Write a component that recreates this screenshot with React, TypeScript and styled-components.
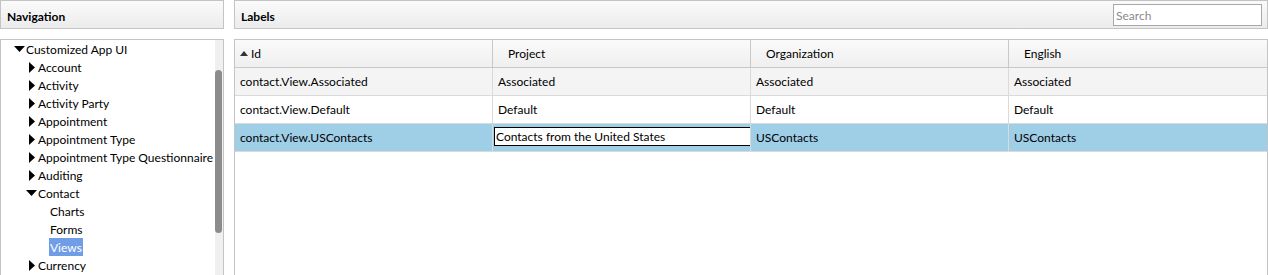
import React from "react";
import styled, { createGlobalStyle } from "styled-components";

const Global = createGlobalStyle`
  html, body { margin: 0; padding: 0; background: #ffffff; overflow: hidden; }
  body { font-family: "Lato", "Open Sans", sans-serif; font-size: 12px; color: #000; }
`;

const Page = styled.div`
  display: flex;
  gap: 10px;
  width: 1268px;
  height: 275px;
  overflow: hidden;
`;

const Column = styled.div<{ $w?: number }>`
  display: flex;
  flex-direction: column;
  gap: 10px;
  ${(p) => (p.$w ? `width: ${p.$w}px; flex: none;` : "flex: 1; min-width: 0;")}
`;

const Header = styled.div`
  height: 29px;
  box-sizing: border-box;
  border: 1px solid #c4c4c4;
  background: linear-gradient(#fafafa, #ececec);
  display: flex;
  align-items: center;
  justify-content: space-between;
  padding: 0 5px 0 6px;
  font-weight: bold;
  font-size: 12px;
`;

const HeaderTitle = styled.span`
  padding-top: 3px;
`;

const SearchBox = styled.div`
  width: 149px;
  height: 22px;
  margin-top: 1px;
  box-sizing: border-box;
  border: 1px solid #a9a9a9;
  background: #fff;
  color: #8a8a8a;
  font-weight: normal;
  font-size: 12px;
  display: flex;
  align-items: center;
  padding-left: 2px;
`;

const TreePanel = styled.div`
  flex: 1;
  border: 1px solid #c4c4c4;
  border-bottom: none;
  display: flex;
  min-height: 0;
`;

const TreeBody = styled.div`
  flex: 1;
`;

const Scrollbar = styled.div`
  width: 8px;
  background: #f0f0f0;
  padding-top: 30px;
  box-sizing: border-box;
`;

const Thumb = styled.div`
  width: 7px;
  height: 163px;
  background: #8c8c8c;
  border-radius: 4px;
`;

const TreeRow = styled.div<{ $indent: number }>`
  height: 18px;
  display: flex;
  align-items: center;
  padding-left: ${(p) => p.$indent}px;
  white-space: nowrap;
`;

const Arrow = styled.span<{ $w: number }>`
  width: ${(p) => p.$w}px;
  display: inline-flex;
  align-items: center;
  flex: none;
`;

const LeafLabel = styled.span<{ $sel?: boolean }>`
  height: 18px;
  display: inline-flex;
  align-items: center;
  padding: 0 1px;
  margin-left: -1px;
  ${(p) => (p.$sel ? "background: #719de6; color: #fff;" : "")}
`;

const GridPanel = styled.div`
  flex: 1;
  border: 1px solid #c4c4c4;
  border-bottom: none;
  display: flex;
  flex-direction: column;
`;

const GridRow = styled.div<{ $bg: string; $head?: boolean }>`
  display: grid;
  grid-template-columns: 258px 258px 258px 1fr;
  height: 28px;
  background: ${(p) => p.$bg};
  border-bottom: 1px solid ${(p) => (p.$head ? "#c8c8c8" : "#dadada")};
  box-sizing: border-box;
`;

const Cell = styled.div<{ $pad: number; $head?: boolean }>`
  display: flex;
  align-items: center;
  padding-left: ${(p) => p.$pad}px;
  border-right: 1px solid ${(p) => (p.$head ? "#c8c8c8" : "#dadada")};
  white-space: nowrap;
  overflow: hidden;
  &:last-child { border-right: none; }
`;

const EditCell = styled.div`
  display: flex;
  align-items: center;
  padding: 2px 0 4px 1px;
  border-right: 1px solid #dadada;
`;

const EditBox = styled.div`
  flex: 1;
  height: 19px;
  box-sizing: border-box;
  border: 1px solid #000;
  border-right: none;
  background: #fff;
  display: flex;
  align-items: center;
  padding-left: 1px;
`;

const Down = () => (
  <svg width="11" height="6" viewBox="0 0 11 6"><polygon points="0,0 11,0 5.5,6" fill="#000" /></svg>
);
const Right = () => (
  <svg width="6" height="11" viewBox="0 0 6 11"><polygon points="0,0 6,5.5 0,11" fill="#000" /></svg>
);
const SortUp = () => (
  <svg width="8" height="5" viewBox="0 0 8 5" style={{ marginRight: 3 }}><polygon points="0,5 8,5 4,0" fill="#333" /></svg>
);

type Node = { label: string; kind: "down" | "right" | "leaf"; indent: number; sel?: boolean };

const tree: Node[] = [
  { label: "Customized App UI", kind: "down", indent: 13 },
  { label: "Account", kind: "right", indent: 28 },
  { label: "Activity", kind: "right", indent: 28 },
  { label: "Activity Party", kind: "right", indent: 28 },
  { label: "Appointment", kind: "right", indent: 28 },
  { label: "Appointment Type", kind: "right", indent: 28 },
  { label: "Appointment Type Questionnaire", kind: "right", indent: 28 },
  { label: "Auditing", kind: "right", indent: 28 },
  { label: "Contact", kind: "down", indent: 25 },
  { label: "Charts", kind: "leaf", indent: 49 },
  { label: "Forms", kind: "leaf", indent: 49 },
  { label: "Views", kind: "leaf", indent: 49, sel: true },
  { label: "Currency", kind: "right", indent: 28 },
];

export default function App() {
  return (
    <>
      <Global />
      <Page>
        <Column $w={224}>
          <Header><HeaderTitle>Navigation</HeaderTitle></Header>
          <TreePanel>
            <TreeBody>
              {tree.map((t) => (
                <TreeRow key={t.label} $indent={t.indent}>
                  {t.kind === "leaf" ? (
                    <LeafLabel $sel={t.sel}>{t.label}</LeafLabel>
                  ) : (
                    <>
                      <Arrow $w={t.kind === "down" ? 12 : 9}>{t.kind === "down" ? <Down /> : <Right />}</Arrow>
                      <span>{t.label}</span>
                    </>
                  )}
                </TreeRow>
              ))}
            </TreeBody>
            <Scrollbar>
              <Thumb />
            </Scrollbar>
          </TreePanel>
        </Column>
        <Column>
          <Header>
            <HeaderTitle>Labels</HeaderTitle>
            <SearchBox>Search</SearchBox>
          </Header>
          <GridPanel>
            <GridRow $bg="linear-gradient(#fafafa, #efefef)" $head>
              <Cell $pad={5} $head><SortUp />Id</Cell>
              <Cell $pad={15} $head>Project</Cell>
              <Cell $pad={15} $head>Organization</Cell>
              <Cell $pad={15} $head>English</Cell>
            </GridRow>
            <GridRow $bg="#f4f4f4">
              <Cell $pad={5}>contact.View.Associated</Cell>
              <Cell $pad={5}>Associated</Cell>
              <Cell $pad={5}>Associated</Cell>
              <Cell $pad={5}>Associated</Cell>
            </GridRow>
            <GridRow $bg="#ffffff">
              <Cell $pad={5}>contact.View.Default</Cell>
              <Cell $pad={5}>Default</Cell>
              <Cell $pad={5}>Default</Cell>
              <Cell $pad={5}>Default</Cell>
            </GridRow>
            <GridRow $bg="#9fcee7">
              <Cell $pad={5}>contact.View.USContacts</Cell>
              <EditCell><EditBox>Contacts from the United States</EditBox></EditCell>
              <Cell $pad={5}>USContacts</Cell>
              <Cell $pad={5}>USContacts</Cell>
            </GridRow>
          </GridPanel>
        </Column>
      </Page>
    </>
  );
}
